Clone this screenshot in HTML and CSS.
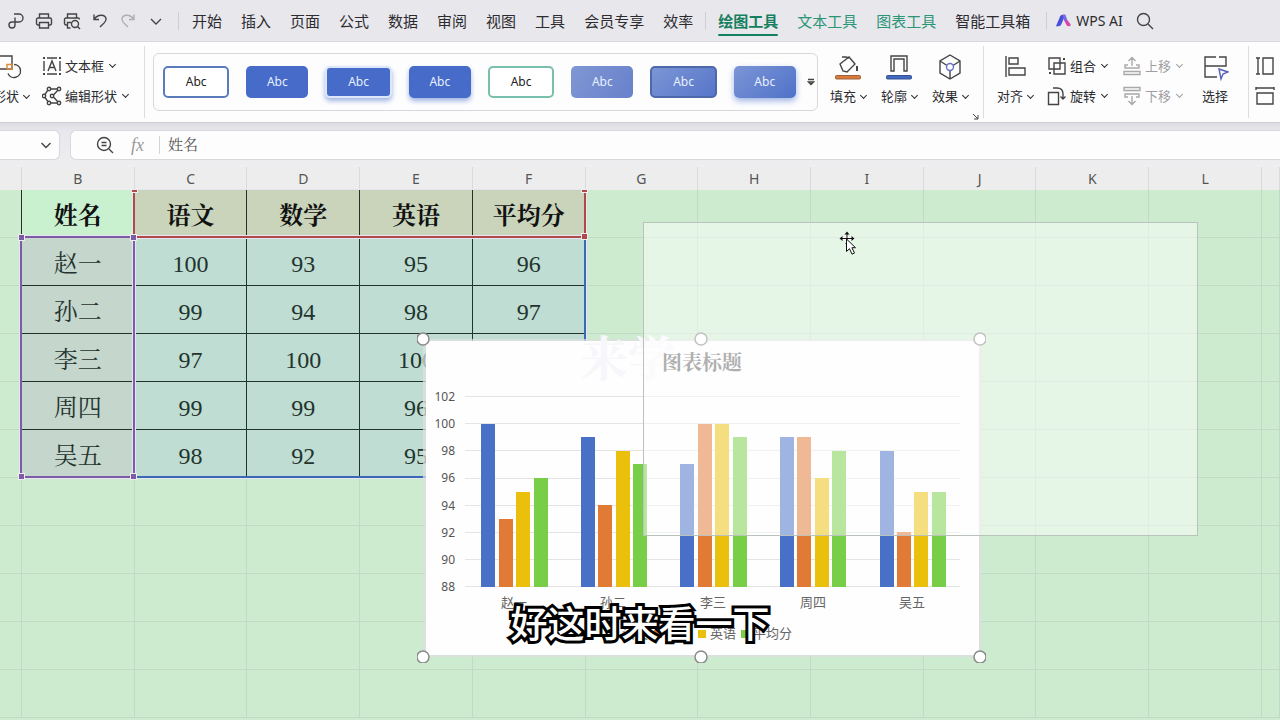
FILE: index.html
```html
<!DOCTYPE html>
<html lang="zh-CN">
<head>
<meta charset="utf-8">
<title>WPS 表格</title>
<link rel="stylesheet" href="styles.css">
</head>
<body>
<nav class="menu">
  <div class="quick">
    <button aria-label="输出"><svg viewBox="0 0 18 18"><path d="M7 2h5a4 4 0 0 1 0 8H5a3 3 0 1 0 3 3V5.500"/></svg></button>
    <button aria-label="打印"><svg viewBox="0 0 18 18"><path d="M4.500 6V2h9v4M4.500 13H3a1.500 1.500 0 0 1-1.500-1.500v-4A1.500 1.500 0 0 1 3 6h12a1.500 1.500 0 0 1 1.500 1.500v4A1.500 1.500 0 0 1 15 13h-1.500M4.500 10.500h9V16h-9z"/></svg></button>
    <button aria-label="打印预览"><svg viewBox="0 0 18 18"><path d="M4.500 6V2h9v4M4 13H3a1.500 1.500 0 0 1-1.500-1.500v-4A1.500 1.500 0 0 1 3 6h12a1.500 1.500 0 0 1 1.500 1.500M7.500 16h-3v-5.500H8"/><circle cx="12" cy="12" r="3.500"/><path d="m14.500 14.500 2.500 2.500"/></svg></button>
    <button aria-label="撤销"><svg viewBox="0 0 18 18"><path d="M3 2.500v5h5M3.300 7C7 2 14 2 15 6.500c.6 3-2 4.500-6 8.500"/></svg></button>
    <button aria-label="恢复" class="off"><svg viewBox="0 0 18 18"><path d="M15 2.500v5h-5M14.700 7C11 2 4 2 3 6.500c-.6 3 2 4.500 6 8.500"/></svg></button>
    <button aria-label="更多"><svg viewBox="0 0 18 18"><path d="m4 7 5 5 5-5"/></svg></button>
  </div>
  <span class="sep"></span>
  <div class="tabs">
    <button>开始</button><button>插入</button><button>页面</button><button>公式</button><button>数据</button><button>审阅</button><button>视图</button><button>工具</button><button>会员专享</button><button>效率</button>
  </div>
  <span class="sep"></span>
  <div class="tabs tools">
    <button class="green active">绘图工具</button><button class="green">文本工具</button><button class="green">图表工具</button><button>智能工具箱</button>
  </div>
  <span class="sep"></span>
  <button class="ai"><svg viewBox="0 0 18 16"><path d="M1 13.500 5.500 3q.8-1.500 2.500-1.500h3L6.500 12q-.8 1.500-2.500 1.500z" fill="#4a50dc"/><path d="M9.500 7 12 5.500l4.500 6q.6 2-1.500 2h-1q-1.500 0-2-1.500z" fill="#d648a8"/><path d="M8 1.500h3L13 7l-3 1z" fill="#7a6ae0"/></svg>WPS AI</button>
  <button class="find" aria-label="搜索"><svg viewBox="0 0 18 18"><circle cx="7.500" cy="7.500" r="6"/><path d="m12 12 5 5"/></svg></button>
</nav>

<section class="ribbon">
  <div class="clip">
    <button class="big"><svg viewBox="0 0 28 28"><path d="M0 3h15v13H0z"/><path d="M17 11.500a6.500 6.500 0 1 1-6 9"/><path d="M10 11.500h5V16h-5z" stroke="#d98b3c"/></svg><span>形状<i class="caret"></i></span></button>
  </div>
  <div class="pair edit">
    <button><svg viewBox="0 0 20 20"><path d="M5 2h10M5 18h10M2 5v10M18 5v10"/><path d="M1 1h2v2H1zM17 1h2v2h-2zM1 17h2v2H1zM17 17h2v2h-2z" fill="#444" stroke="none"/><path d="m6 15 4-10 4 10M7.400 11.500h5.200"/></svg>文本框<i class="caret"></i></button>
    <button><svg viewBox="0 0 20 20"><path d="M8.500 3h7M5.800 4.200 3 8.500M3 11.500l3 4.200M8.500 17h7M15.800 4.200 11.500 9M11.500 11l4.300 4.800"/><circle cx="7" cy="3" r="1.700"/><circle cx="17" cy="3" r="1.700"/><circle cx="2" cy="10" r="1.700"/><circle cx="10" cy="10" r="1.700"/><circle cx="7" cy="17" r="1.700"/><circle cx="17" cy="17" r="1.700"/></svg>编辑形状<i class="caret"></i></button>
  </div>
  <span class="rule"></span>
  <div class="gallery">
    <button class="s1">Abc</button><button class="s2">Abc</button><button class="s3">Abc</button><button class="s4">Abc</button><button class="s5">Abc</button><button class="s6">Abc</button><button class="s7">Abc</button><button class="s8">Abc</button>
    <button class="drop" aria-label="更多样式"><svg viewBox="0 0 8 8"><path d="M1 1.500h6M1.500 4h5L4 6.500z"/></svg></button>
  </div>
  <div class="looks">
    <button class="big"><svg viewBox="0 0 28 28"><path d="m6 11 9-7 6 7-8 8-4-1zM8 4h4l3 1M15 4l6 7"/><path d="M23 13v5" stroke-width="2"/><rect x="1.500" y="22.500" width="25" height="3.500" rx="1" fill="#d87b3a" stroke="#a0623a" stroke-width="1"/></svg><span>填充<i class="caret"></i></span></button>
    <button class="big"><svg viewBox="0 0 28 28"><path d="M6 18V3h16v15h-3V6H9v12z"/><rect x="1.500" y="22.500" width="25" height="3.500" rx="1" fill="#4468c0" stroke="#33528f" stroke-width="1"/></svg><span>轮廓<i class="caret"></i></span></button>
    <button class="big"><svg viewBox="0 0 28 28"><path d="m14 2 10 6v12l-10 6-10-6V8zM4 8l7 4.500M24 8l-7 4.500M14 18v8"/><circle cx="14" cy="14" r="3.500" stroke="#6670c8"/></svg><span>效果<i class="caret"></i></span></button>
    <svg class="corner" viewBox="0 0 8 8"><path d="m1 1 5 5M6 2v4H2"/></svg>
  </div>
  <span class="rule"></span>
  <div class="arrange">
    <button class="big"><svg viewBox="0 0 28 28"><path d="M5 3v21M8 5h9v6H8zM8 15h16v7H8z"/></svg><span>对齐<i class="caret"></i></span></button>
    <div class="pair">
      <button><svg viewBox="0 0 20 20"><path d="M2 2h11v11H2zM7 7h11v11H7z"/><path d="M16 2h2v2h-2zM2 16h2v2H2z" fill="#444" stroke="none"/></svg>组合<i class="caret"></i></button>
      <button><svg viewBox="0 0 20 20"><path d="M1.500 6.500h10v12h-10zM6 2h4q6 0 6 6v5M13.500 10.500 16 13l2.500-2.500"/></svg>旋转<i class="caret"></i></button>
    </div>
    <div class="pair off">
      <button disabled><svg viewBox="0 0 20 20"><path d="M10 10V1.500M6.500 5 10 1.500 13.500 5M6 9H3v3h14V9h-3M2 15.500h16v3H2z"/></svg>上移<i class="caret"></i></button>
      <button disabled><svg viewBox="0 0 20 20"><path d="M10 10v8.500M6.500 15l3.500 3.500 3.500-3.500M6 11H3V8h14v3h-3M2 1.500h16v3H2z"/></svg>下移<i class="caret"></i></button>
    </div>
    <button class="big"><svg viewBox="0 0 28 28"><path d="M15 4H4v9h21V4h-7M4 13v11h12M15 4v0"/><path d="m18 16 9 3-5 2-2 5z" stroke="#5560b8" fill="#fdfdfe"/></svg><span>选择</span></button>
  </div>
  <span class="rule"></span>
  <div class="size">
    <svg viewBox="0 0 20 20"><path d="M3 2v16M1 2h4M1 18h4M8 2h10v16H8z"/></svg>
    <svg viewBox="0 0 20 20"><path d="M1 2h18M1 1v3M19 1v3M2 7h16v11H2z"/></svg>
  </div>
</section>

<section class="formula">
  <button class="namebox" aria-label="名称框"><svg viewBox="0 0 12 12"><path d="m1.500 4 4.500 4.500L10.500 4"/></svg></button>
  <div class="bar">
    <svg class="lens" viewBox="0 0 18 18"><circle cx="8" cy="8" r="6.500"/><path d="m13 13 4 4M5.500 6.500h5M5.500 9.500h5"/></svg>
    <span class="fx">fx</span>
    <span class="line"></span>
    <input aria-label="编辑栏" value="姓名">
  </div>
</section>

<main class="sheet">
  <table>
    <colgroup><col class="edge-l"><col span="11"><col class="edge-r"></colgroup>
    <thead><tr><th></th><th>B</th><th>C</th><th>D</th><th>E</th><th>F</th><th>G</th><th>H</th><th>I</th><th>J</th><th>K</th><th>L</th><th></th></tr></thead>
    <tbody>
      <tr class="title"><td></td><td>姓名</td><td>语文</td><td>数学</td><td>英语</td><td>平均分</td><td></td><td></td><td></td><td></td><td></td><td></td><td></td></tr>
      <tr class="data"><td></td><td>赵一</td><td>100</td><td>93</td><td>95</td><td>96</td><td></td><td></td><td></td><td></td><td></td><td></td><td></td></tr>
      <tr class="data"><td></td><td>孙二</td><td>99</td><td>94</td><td>98</td><td>97</td><td></td><td></td><td></td><td></td><td></td><td></td><td></td></tr>
      <tr class="data"><td></td><td>李三</td><td>97</td><td>100</td><td>100</td><td></td><td></td><td></td><td></td><td></td><td></td><td></td><td></td></tr>
      <tr class="data"><td></td><td>周四</td><td>99</td><td>99</td><td>96</td><td></td><td></td><td></td><td></td><td></td><td></td><td></td><td></td></tr>
      <tr class="data"><td></td><td>吴五</td><td>98</td><td>92</td><td>95</td><td></td><td></td><td></td><td></td><td></td><td></td><td></td><td></td></tr>
      <tr><td></td><td></td><td></td><td></td><td></td><td></td><td></td><td></td><td></td><td></td><td></td><td></td><td></td></tr>
      <tr><td></td><td></td><td></td><td></td><td></td><td></td><td></td><td></td><td></td><td></td><td></td><td></td><td></td></tr>
      <tr><td></td><td></td><td></td><td></td><td></td><td></td><td></td><td></td><td></td><td></td><td></td><td></td><td></td></tr>
      <tr><td></td><td></td><td></td><td></td><td></td><td></td><td></td><td></td><td></td><td></td><td></td><td></td><td></td></tr>
      <tr><td></td><td></td><td></td><td></td><td></td><td></td><td></td><td></td><td></td><td></td><td></td><td></td><td></td></tr>
    </tbody>
  </table>
  <div class="ranges">
    <div class="range values"></div>
    <div class="range series"><i class="tl"></i><i class="tr"></i><i class="br"></i></div>
    <div class="range names"><i class="tl"></i><i class="tr"></i><i class="bl"></i><i class="br"></i></div>
  </div>

  <svg class="chart" viewBox="417 332 569 331" role="img" aria-label="图表标题">
    <rect x="423" y="339" width="559" height="318" fill="#dcdfdd" opacity=".75"/>
    <rect x="426" y="341" width="553" height="314" fill="#fefefe"/>
    <text class="mark" x="580" y="376">来学</text>
    <g class="grid"><path d="M465 396.500h495M465 423.500h495M465 450.500h495M465 478.500h495M465 505.500h495M465 532.500h495M465 559.500h495M465 586.500h495"/></g>
    <text class="ctitle" x="702" y="370">图表标题</text>
    <g class="axis">
      <text x="455" y="401">102</text><text x="455" y="428">100</text><text x="455" y="455">98</text><text x="455" y="482">96</text><text x="455" y="510">94</text><text x="455" y="537">92</text><text x="455" y="564">90</text><text x="455" y="591">88</text>
    </g>
    <g fill="#4870c6"><path d="M481 424h14v163h-14zM581 437h14v150h-14zM680 464h14v123h-14zM780 437h14v150h-14zM880 451h14v136h-14z"/></g>
    <g fill="#e07a34"><path d="M499 519h14v68h-14zM598 505h14v82h-14zM698 424h14v163h-14zM797 437h14v150h-14zM897 532h14v55h-14z"/></g>
    <g fill="#eac00c"><path d="M516 492h14v95h-14zM616 451h14v136h-14zM715 424h14v163h-14zM815 478h14v109h-14zM914 492h14v95h-14z"/></g>
    <g fill="#78cf47"><path d="M534 478h14v109h-14zM633 464h14v123h-14zM733 437h14v150h-14zM832 451h14v136h-14zM932 492h14v95h-14z"/></g>
    <g class="cats"><text x="514" y="607">赵一</text><text x="613" y="607">孙二</text><text x="713" y="607">李三</text><text x="813" y="607">周四</text><text x="912" y="607">吴五</text></g>
    <g class="legend">
      <path d="M610 630h8v8h-8z" fill="#4870c6"/><text x="622" y="638">语文</text>
      <path d="M654 630h8v8h-8z" fill="#e07a34"/><text x="666" y="638">数学</text>
      <path d="M698 630h8v8h-8z" fill="#eac00c"/><text x="710" y="638">英语</text>
      <path d="M741 630h8v8h-8z" fill="#78cf47"/><text x="753" y="638">平均分</text>
    </g>
    <g fill="#fff" stroke="#8a8a8a" stroke-width="1.500"><circle cx="423" cy="339" r="6"/><circle cx="701" cy="339" r="6"/><circle cx="980" cy="339" r="6"/><circle cx="423" cy="657" r="6"/><circle cx="701" cy="657" r="6"/><circle cx="980" cy="657" r="6"/></g>
  </svg>
  <div class="ghost"></div>
  <svg class="cursor" viewBox="0 0 18 26"><path d="M8 1v12M1 7.500h14" stroke="#fff" stroke-width="3"/><path d="M8 3v9M3 7.500h10"/><path d="M8 .5 10.500 3.500h-5zM.5 7.500l3-2.500v5zM15.500 7.500l-3-2.500v5zM6 13h2V11z" fill="#111" stroke="none"/><path d="M7.500 8v12.500l3-2.800 2.500 5.500 2.500-1.200-2.600-5.300h3.600z" fill="#fff"/></svg>
  <div class="caption">好这时来看一下</div>
</main>
</body>
</html>
```
FILE: styles.css
```css
* { box-sizing: border-box; }
body {
  margin: 0;
  height: 100vh;
  overflow: hidden;
  display: flex;
  flex-direction: column;
  background: #e4e3e9;
  color: #2c2c30;
  font: 13px/20px "Noto Sans", "Noto Sans CJK SC", sans-serif;
}
button {
  border: 0;
  padding: 0;
  background: none;
  color: inherit;
  font: inherit;
  white-space: nowrap;
}
svg {
  display: block;
  flex: none;
  fill: none;
  stroke: #444;
  stroke-width: 1.4;
}

/* menu */
.menu {
  flex: none;
  height: 42px;
  display: flex;
  align-items: center;
  padding: 0 0 0 7px;
  background: #e8e7ec;
  border-bottom: 1px solid #d9d8de;
  font-size: 15px;
}
.quick { display: flex; gap: 10px; }
.quick svg { width: 18px; height: 18px; }
.quick .off { opacity: .35; }
.sep {
  width: 1px;
  height: 18px;
  margin: 0 12px;
  background: #cfced4;
}
.tabs { display: flex; gap: 19px; }
.green { color: #2b9576; }
.active {
  position: relative;
  color: #14805e;
  font-weight: 700;
}
.active::after {
  content: "";
  position: absolute;
  inset: auto 0 -5px;
  height: 2px;
  border-radius: 1px;
  background: #14805e;
}
.quick + .sep { margin: 0 13px; }
.tools + .sep { margin: 0 8px 0 16px; }
.ai {
  display: flex;
  align-items: center;
  gap: 4px;
  font-size: 14px;
}
.ai svg { width: 17px; height: 16px; stroke: none; }
.find { margin-left: 13px; }
.find svg { width: 18px; height: 18px; }

/* ribbon */
.ribbon {
  flex: none;
  height: 81px;
  display: flex;
  align-items: center;
  background: #fdfdfe;
  border-bottom: 1px solid #cfced4;
  overflow: hidden;
}
.caret {
  display: inline-block;
  width: 5px;
  height: 5px;
  margin: 0 2px 3px 6px;
  border: solid currentColor;
  border-width: 0 1px 1px 0;
  transform: rotate(45deg);
}
.big {
  display: flex;
  flex-direction: column;
  align-items: center;
  gap: 5px;
  padding-bottom: 5px;
}
.big svg { width: 28px; height: 28px; }
.big .caret { margin-right: 1px; margin-left: 5px; }
.clip {
  width: 30px;
  display: flex;
  justify-content: flex-end;
}
.pair {
  display: flex;
  flex-direction: column;
  gap: 10px;
  padding-bottom: 2px;
}
.pair button {
  display: flex;
  align-items: center;
  gap: 3px;
}
.pair svg { width: 20px; height: 20px; }
.pair .caret { margin-left: 3px; }
.off { opacity: .45; }
.edit { margin: 0 14px 0 12px; }
.rule {
  width: 1px;
  height: 72px;
  background: #dddce0;
}
.gallery {
  flex: 1;
  height: 58px;
  margin: 0 12px 0 8px;
  padding: 0 2px 0 9px;
  display: flex;
  align-items: center;
  gap: 17px;
  border: 1px solid #d8d8dc;
  border-radius: 6px;
}
.gallery button {
  flex: 1;
  height: 32px;
  border-radius: 5px;
  background: #466bc8;
  color: #e8f0ff;
  font-size: 12px;
}
.gallery .s1 { border: 2px solid #5b7cba; background: #fff; color: #222; }
.gallery .s3 { border: 2px solid #dce8fa; box-shadow: 0 3px 5px #9fb4e3; }
.gallery .s4 { box-shadow: 0 3px 5px #9fb4e3; }
.gallery .s5 { border: 2px solid #78bfae; background: #fff; color: #222; }
.gallery .s6 { background: linear-gradient(120deg, #8097d3, #6781cb); }
.gallery .s7 { border: 2px solid #4c69ac; background: linear-gradient(140deg, #7c95d5, #5676c9); }
.gallery .s8 { background: linear-gradient(140deg, #7c95d5, #4f72c9); box-shadow: 0 3px 6px #9fb4e3; }
.gallery .drop { flex: none; width: 8px; margin-left: -6px; background: none; }
.drop svg { width: 8px; height: 8px; }
.looks {
  position: relative;
  display: flex;
  gap: 14px;
  padding-right: 14px;
}
.corner {
  position: absolute;
  right: 3px;
  bottom: -10px;
  width: 8px;
  height: 8px;
  stroke-width: 1;
}
.arrange {
  display: flex;
  align-items: center;
  gap: 13px;
  padding: 0 19px 0 13px;
}
.arrange > .big:last-child { margin-left: 4px; }
.size {
  width: 31px;
  padding: 0 0 2px 6px;
  display: grid;
  gap: 10px;
}
.size svg { width: 20px; height: 20px; }

/* formula bar */
.formula {
  flex: none;
  display: flex;
  gap: 10px;
  padding: 7px 0;
  background: linear-gradient(#dedde3, #e8e7ec 8px, #eeedef);
}
.namebox {
  width: 60px;
  height: 30px;
  display: flex;
  align-items: center;
  justify-content: flex-end;
  padding-right: 7px;
  background: #fdfdfe;
  border: 1px solid #d9d8dd;
  border-left: 0;
  border-radius: 0 6px 6px 0;
}
.namebox svg { width: 12px; height: 12px; }
.bar {
  flex: 1;
  height: 30px;
  display: flex;
  align-items: center;
  padding-left: 25px;
  background: #fdfdfe;
  border: 1px solid #d9d8dd;
  border-right: 0;
  border-radius: 6px 0 0 6px;
}
.lens { width: 18px; height: 18px; }
.fx {
  margin: 0 15px 0 17px;
  color: #999;
  font: italic 18px/20px "Liberation Serif", serif;
}
.line { width: 1px; height: 18px; background: #d5d5da; }
.bar input {
  flex: 1;
  border: 0;
  padding: 0 0 3px 8px;
  outline: 0;
  background: none;
  color: #555;
  font: 400 15px/20px "Noto Serif CJK SC", "Noto Sans CJK SC", serif;
}

/* sheet */
.sheet {
  position: relative;
  flex: 1;
  overflow: hidden;
  background: #cdebcf;
}
table {
  width: 100%;
  table-layout: fixed;
  border-collapse: separate;
  border-spacing: 0;
}
.edge-l { width: 22px; }
.edge-r { width: 18px; }
th {
  height: 23px;
  padding: 0;
  background: #ededee;
  border-right: 1px solid #dadadc;
  color: #555;
  font: 14px/22px "Noto Sans", sans-serif;
}
td {
  height: 48px;
  padding: 4px 0 0;
  border: solid #c3d8c8;
  border-width: 0 1px 1px 0;
  text-align: center;
  color: #24332e;
  font: 400 24px/40px "Liberation Serif", "Noto Serif CJK SC", "Noto Sans CJK SC", serif;
}
.title td:nth-child(-n+6) { border-right-color: #23332a; }
.title td { font-weight: 700; color: #111; }
.title td:nth-child(2) { background: #c9f0cf; }
.title td:nth-child(n+3):nth-child(-n+6) { background: #c9d4bb; }
.data td:nth-child(n+2):nth-child(-n+6) {
  background: #bfddd2;
  border-color: #23332a;
}
.data td:nth-child(2):nth-child(2) { background: #c5d6cd; }
.ranges {
  position: absolute;
  inset: 0;
  display: grid;
  grid-template-columns: 22px repeat(11, 1fr) 18px;
  grid-template-rows: 23px 48px 240px;
}
.range {
  position: relative;
  margin: -2px 0 0 -2px;
  border: 2px solid;
  box-shadow: 0 0 0 1px #e6e4f0;
}
.names { grid-area: 3 / 2; color: #7e5ba6; }
.series { grid-area: 2 / 3 / 3 / 7; color: #b04a4a; border-top: 0; margin-top: 0; }
.values { grid-area: 3 / 3 / 4 / 7; color: #3a68b4; }
.range i {
  position: absolute;
  width: 5px;
  height: 5px;
  background: currentColor;
  box-shadow: 0 0 0 1px #eee;
}
.tl, .bl { left: -3px; }
.tr, .br { right: -3px; }
.tl, .tr { top: -3px; }
.bl, .br { bottom: -3px; }
.series .tl, .series .tr { top: 0; height: 2px; }

/* floating objects on the sheet */
.chart {
  position: absolute;
  left: 417px;
  top: 165px;
  width: 569px;
  height: 331px;
  stroke: none;
}
.chart text { font: 13px "Noto Sans CJK SC", sans-serif; fill: #666; }
.chart .ctitle { font: 700 20px "Noto Serif CJK SC", "Noto Sans CJK SC", serif; fill: #666; text-anchor: middle; }
.chart .mark { font: 700 48px "Noto Serif CJK SC", serif; fill: #f7f7fb; }
.chart .axis text { font: 12px "Noto Sans", sans-serif; fill: #555; text-anchor: end; }
.chart .cats text { text-anchor: middle; }
.chart .grid { stroke: #e4e4e6; stroke-width: 1; }
.ghost {
  position: absolute;
  left: 643px;
  top: 55px;
  width: 555px;
  height: 314px;
  border: 1px solid #b9c3bc;
  background: rgba(255, 255, 255, .48);
}
.cursor {
  position: absolute;
  left: 839px;
  top: 64px;
  width: 18px;
  height: 26px;
  stroke: #111;
  stroke-width: 1;
}
.caption {
  position: absolute;
  inset: auto 0 71px;
  text-align: center;
  color: #fff;
  font: 500 37px/54px "Noto Sans CJK SC", sans-serif;
  -webkit-text-stroke: 6px #000;
  paint-order: stroke fill;
  stroke-linejoin: round;
}
```
